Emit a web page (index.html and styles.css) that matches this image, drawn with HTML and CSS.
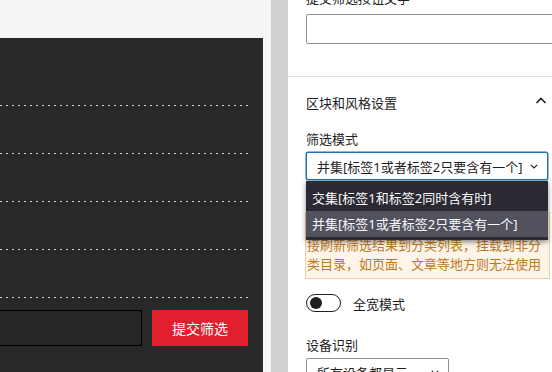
FILE: index.html
```html
<!DOCTYPE html>
<html lang="zh-CN">
<head>
<meta charset="utf-8">
<title>筛选设置</title>
<link rel="stylesheet" href="styles.css">
</head>
<body>
<div class="page">
  <div class="canvas">
    <div class="dark">
      <div class="rows">
        <div class="row"></div>
        <div class="row"></div>
        <div class="row"></div>
        <div class="row"></div>
        <div class="row"></div>
      </div>
      <div class="form">
        <div class="field"></div>
        <button class="submit">提交筛选</button>
      </div>
    </div>
  </div>
  <div class="strip"></div>
  <div class="bar"></div>
  <aside class="panel">
    <div class="scroll">
      <section class="sec sec-first">
        <div class="label">提交筛选按钮文字</div>
        <div class="text-input"></div>
      </section>
      <section class="sec">
        <div class="sec-head">
          <span>区块和风格设置</span>
          <svg class="chev-up" width="12" height="12" viewBox="0 0 12 12"><path d="M1.5 8 L6 3.5 L10.5 8" fill="none" stroke="#1e1e1e" stroke-width="1.6"/></svg>
        </div>
        <div class="label label-mode">筛选模式</div>
        <div class="select-wrap">
          <div class="select focus">
            <span>并集[标签1或者标签2只要含有一个]</span>
            <svg class="chev-down" width="8" height="5" viewBox="0 0 8 5"><path d="M0.8 0.8 L4 4 L7.2 0.8" fill="none" stroke="#1e1e1e" stroke-width="1.1"/></svg>
          </div>
          <ul class="menu">
            <li>交集[标签1和标签2同时含有时]</li>
            <li class="hover">并集[标签1或者标签2只要含有一个]</li>
          </ul>
        </div>
        <div class="notice">开启后，点击提交筛选按钮时页面将会直接刷新筛选结果到分类列表，挂载到非分类目录，如页面、文章等地方则无法使用</div>
        <div class="toggle-row">
          <span class="toggle"><span class="knob"></span></span>
          <span class="toggle-text">全宽模式</span>
        </div>
        <div class="label label-device">设备识别</div>
        <div class="select small">
          <span>所有设备都显示</span>
          <svg class="chev-down" width="8" height="5" viewBox="0 0 8 5"><path d="M0.8 0.8 L4 4 L7.2 0.8" fill="none" stroke="#1e1e1e" stroke-width="1.1"/></svg>
        </div>
      </section>
    </div>
  </aside>
</div>
</body>
</html>
```

FILE: styles.css
```css
html, body {
  margin: 0;
  padding: 0;
  height: 100%;
  overflow: hidden;
}
body {
  font-family: "Noto Sans", "Noto Sans CJK SC", sans-serif;
  font-size: 13px;
  color: #1e1e1e;
  background: #f5f5f5;
}
.page {
  display: flex;
  width: 552px;
  height: 372px;
  overflow: hidden;
}
.canvas {
  flex: 0 0 263px;
  width: 263px;
  padding-top: 38px;
  box-sizing: border-box;
  background: #f5f5f5;
  display: flex;
  justify-content: flex-end;
  overflow: hidden;
}
.dark {
  flex: 0 0 400px;
  width: 400px;
  height: 334px;
  background: #282828;
  padding: 20px 15px 0 0;
  box-sizing: border-box;
}
.row {
  height: 48px;
  background: repeating-linear-gradient(to left, #d4d4d4 0 2px, transparent 2px 6px) left bottom / 100% 1px no-repeat;
}
.form {
  display: flex;
  gap: 10px;
  margin-top: 12px;
  height: 36px;
}
.field {
  flex: 1;
  border: 1px solid #000;
  background: #262626;
}
.submit {
  flex: 0 0 96px;
  border: 0;
  margin: 0;
  padding: 0;
  background: #e11f2f;
  color: #fff;
  font-family: "Noto Sans CJK SC", sans-serif;
  font-size: 14px;
}
.strip {
  flex: 0 0 8px;
  background: #f5f5f5;
}
.bar {
  flex: 0 0 17px;
  background: #d0d0d0;
}
.panel {
  flex: 0 0 280px;
  width: 280px;
  background: #fff;
  overflow: hidden;
}
.scroll {
  margin-top: -11px;
}
.sec {
  padding: 0 18px;
}
.sec-first {
  padding-bottom: 32px;
  border-bottom: 1px solid #e0e0e0;
}
.label {
  line-height: 18px;
}
.sec-first .label {
  margin-bottom: 7px;
}
.text-input {
  height: 30px;
  width: 270px;
  box-sizing: border-box;
  border: 1px solid #8c8f94;
  border-radius: 2px;
}
.sec-head {
  height: 50px;
  display: flex;
  align-items: center;
  justify-content: space-between;
}
.chev-up {
  margin-right: 3px;
  margin-top: -2px;
}
.label-mode {
  margin-top: 3px;
}
.select-wrap {
  position: relative;
  margin-top: 4px;
}
.select {
  height: 28px;
  box-sizing: border-box;
  display: flex;
  align-items: center;
  justify-content: space-between;
  padding: 0 9px 0 10px;
  border: 1px solid #8c8f94;
  border-radius: 2px;
  background: #fff;
  white-space: nowrap;
}
.select.focus {
  width: 242px;
  border-color: #2271b1;
  box-shadow: 0 0 0 0.5px #2271b1;
}
.menu {
  position: absolute;
  top: 29px;
  left: 0;
  width: 242px;
  margin: 0;
  padding: 4px 0 3px;
  list-style: none;
  background: #2b2a33;
  box-shadow: 0 2px 5px rgba(0, 0, 0, 0.45);
  z-index: 2;
}
.menu li {
  height: 26px;
  line-height: 26px;
  padding-left: 6px;
  color: #fbfbfe;
  white-space: nowrap;
}
.menu li.hover {
  background: #52525e;
}
.notice {
  margin-top: 32px;
  width: 245px;
  box-sizing: border-box;
  padding: 4px 5px 4px 1px;
  border: 1px solid #f2cba6;
  background: #fdf4ea;
  color: #c0781c;
  line-height: 19px;
  margin-left: -1px;
}
.toggle-row {
  display: flex;
  align-items: center;
  margin-top: 15px;
  height: 18px;
}
.toggle {
  width: 35px;
  height: 18px;
  box-sizing: border-box;
  border: 1px solid #1e1e1e;
  border-radius: 9px;
  display: flex;
  align-items: center;
  padding-left: 3px;
}
.knob {
  width: 12px;
  height: 12px;
  border-radius: 50%;
  background: #1e1e1e;
}
.toggle-text {
  margin-left: 12px;
}
.label-device {
  margin-top: 24px;
}
.select.small {
  margin-top: 4px;
  width: 143px;
}
```
